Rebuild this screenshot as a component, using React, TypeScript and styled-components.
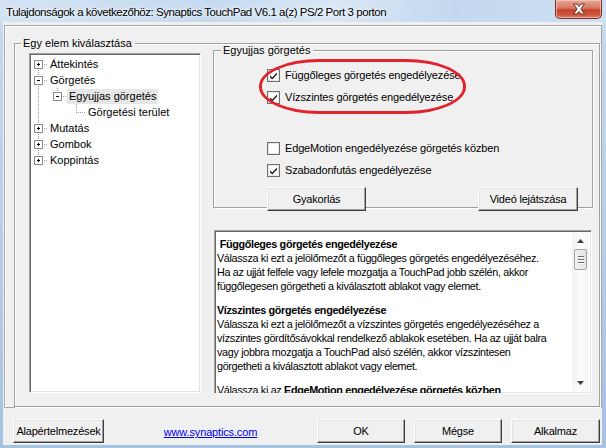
import React from 'react';
import styled, { createGlobalStyle } from 'styled-components';

const Global = createGlobalStyle`
  html, body { margin: 0; padding: 0; background: #fff; }
  body { font-family: "Liberation Sans", Arial, sans-serif; font-size: 11px; color: #000; }
  #root { width: 606px; height: 448px; }
`;

const Window = styled.div`
  width: 606px;
  height: 448px;
  box-sizing: border-box;
  display: flex;
  flex-direction: column;
  overflow: hidden;
  background: linear-gradient(180deg, #cfe0f2 0%, #c2d8ee 10%, #b4cde8 60%, #a6c2e2 100%);
`;

const TitleBar = styled.div`
  height: 22px;
  flex: none;
  display: flex;
  align-items: flex-start;
  justify-content: space-between;
  padding: 0 4px 0 6px;
  background: linear-gradient(100deg, #d3e3f4 0%, #c5daf0 35%, #d9e7f6 55%, #c3d8ee 75%, #cfe0f3 100%);
`;

const TitleText = styled.div`
  font-family: "Liberation Sans", Arial, sans-serif;
  font-size: 11.5px;
  letter-spacing: -0.46px;
  line-height: 13px;
  margin-top: 6px;
  color: #000;
  text-shadow: 0 0 6px #fff, 0 0 3px #fff;
  white-space: nowrap;
`;

const CloseButton = styled.div`
  width: 47px;
  height: 19px;
  box-sizing: border-box;
  border: 1px solid #7a3127;
  border-top: none;
  border-radius: 0 0 5px 5px;
  background: linear-gradient(180deg, #e8a899 0%, #d97762 45%, #c2412a 55%, #cf5a40 85%, #e0836a 100%);
  box-shadow: inset 0 0 0 1px rgba(255, 220, 210, 0.55);
  display: flex;
  align-items: center;
  justify-content: center;
`;

const Frame = styled.div`
  flex: 1;
  display: flex;
  flex-direction: column;
  padding: 0 4px 3px 3px;
  min-height: 0;
`;

const Client = styled.div`
  flex: 1;
  background: #f0f0f0;
  display: flex;
  flex-direction: column;
  padding: 3px 0 2px 1px;
  min-height: 0;
`;

const Panel = styled.div`
  height: 383px;
  box-sizing: border-box;
  border: 1px solid #a7a7a7;
  box-shadow: inset 1px 1px 0 #fff;
  padding: 11px 1px 0 9px;
  display: flex;
  flex-direction: column;
`;

const Group = styled.fieldset`
  margin: 0;
  min-width: 0;
  box-sizing: border-box;
  border: 1px solid #a0a0a0;
  box-shadow: inset 1px 1px 0 #fff, 1px 1px 0 #fff;
  padding: 0;
`;

const Legend = styled.legend<{ $left: number }>`
  font-size: 11px;
  line-height: 13px;
  padding: 0 3px 0 2px;
  margin-left: ${(p) => p.$left}px;
  white-space: nowrap;
`;

const MainGroup = styled(Group)`
  flex: none;
  height: 370px;
`;

const MainBody = styled.div`
  display: flex;
  padding: 3px 0 0 14px;
  gap: 12px;
`;

const Sunken = styled.div`
  box-sizing: border-box;
  background: #fff;
  border: 1px solid;
  border-color: #a0a0a0 #fff #fff #a0a0a0;
  box-shadow: inset 1px 1px 0 #696969, inset -1px -1px 0 #e3e3e3;
`;

const TreeBox = styled(Sunken)`
  width: 172px;
  height: 340px;
  padding: 2px 2px;
  overflow: hidden;
`;

const TreeRow = styled.div`
  height: 16px;
  display: flex;
  align-items: center;
`;

const TreeLabel = styled.span<{ $selected?: boolean }>`
  line-height: 15px;
  padding: 0 2px;
  white-space: nowrap;
  background: ${(p) => (p.$selected ? '#e6e6e6' : 'transparent')};
`;

const RightCol = styled.div`
  width: 380px;
  display: flex;
  flex-direction: column;
  margin-top: -9px;
`;

const OptionsGroup = styled(Group)`
  position: relative;
  height: 164px;
`;

const OptionsBody = styled.div`
  padding: 7px 0 0 53px;
  display: flex;
  flex-direction: column;
`;

const CheckRow = styled.label<{ $gap?: number }>`
  height: 22px;
  display: flex;
  align-items: center;
  gap: 5px;
  margin-top: ${(p) => p.$gap || 0}px;
  white-space: nowrap;
  letter-spacing: -0.15px;
`;

const ButtonRow = styled.div`
  display: flex;
  justify-content: space-between;
  padding-right: 14px;
  margin-top: 6px;
`;

const Button = styled.button<{ $w: number }>`
  width: ${(p) => p.$w}px;
  height: 24px;
  box-sizing: border-box;
  font-family: "Liberation Sans", Arial, sans-serif;
  font-size: 11px;
  letter-spacing: -0.2px;
  white-space: nowrap;
  color: #000;
  background: #f0f0f0;
  border: 1px solid;
  border-color: #fff #404040 #404040 #fff;
  box-shadow: inset -1px -1px 0 #a0a0a0, inset 1px 1px 0 #e3e3e3;
  padding: 0;
  border-radius: 0;
`;

const Highlight = styled.div`
  position: absolute;
  left: 45px;
  top: 2px;
  width: 207px;
  height: 55px;
  box-sizing: border-box;
  border: 3px solid #e0232d;
  border-radius: 60px / 27px;
  pointer-events: none;
`;

const DescBox = styled(Sunken)`
  margin: 22px 0 0 1px;
  width: 378px;
  height: 164px;
  display: flex;
  overflow: hidden;
`;

const DescText = styled.div`
  flex: 1;
  min-width: 0;
  padding: 6px 0 0 2px;
  font-size: 10.8px;
  letter-spacing: -0.33px;
  line-height: 14px;
  overflow: hidden;
`;

const Para = styled.div`
  margin: 0 0 10px 0;
`;

const Line = styled.div`
  white-space: nowrap;
`;

const Heading = styled.div`
  white-space: nowrap;
  font-weight: bold;
`;

const ScrollBar = styled.div`
  width: 17px;
  flex: none;
  margin: 2px 2px 2px 0;
  display: flex;
  flex-direction: column;
  align-items: center;
  background: linear-gradient(90deg, #f3f3f3, #fcfcfc 50%, #f3f3f3);
`;

const ScrollArrow = styled.div`
  height: 16px;
  display: flex;
  align-items: center;
  justify-content: center;
`;

const Thumb = styled.div`
  width: 13px;
  height: 21px;
  box-sizing: border-box;
  border: 1px solid #a4a4a4;
  border-radius: 2px;
  background: linear-gradient(90deg, #f1f1f1, #e3e3e3);
  display: flex;
  flex-direction: column;
  align-items: center;
  justify-content: center;
  gap: 2px;
`;

const Grip = styled.div`
  width: 6px;
  height: 1px;
  background: #6d6d6d;
  box-shadow: 0 1px 0 #fff;
`;

const ScrollSpacer = styled.div`
  flex: 1;
`;

const Footer = styled.div`
  display: flex;
  align-items: center;
  padding: 11px 2px 0 9px;
`;

const LinkArea = styled.div`
  flex: 1;
  display: flex;
  justify-content: center;
`;

const Link = styled.a`
  color: #0000ee;
  text-decoration: underline;
  font-size: 11px;
  letter-spacing: -0.15px;
  margin-top: 2px;
`;

const FooterButtons = styled.div`
  display: flex;
  gap: 9px;
`;

type Node = {
  label: string;
  level: number;
  exp?: '+' | '-';
  last?: boolean;
  first?: boolean;
  cont: boolean[];
  selected?: boolean;
};

const nodes: Node[] = [
  { label: 'Áttekintés', level: 0, exp: '+', first: true, cont: [] },
  { label: 'Görgetés', level: 0, exp: '-', cont: [] },
  { label: 'Egyujjas görgetés', level: 1, exp: '-', last: true, cont: [true], selected: true },
  { label: 'Görgetési terület', level: 2, last: true, cont: [true, false] },
  { label: 'Mutatás', level: 0, exp: '+', cont: [] },
  { label: 'Gombok', level: 0, exp: '+', cont: [] },
  { label: 'Koppintás', level: 0, exp: '+', last: true, cont: [] },
];

const DOT = '#a0a0a0';

function Gutter({ n }: { n: Node }) {
  const cx = (l: number) => 6 + 19 * l;
  const w = cx(n.level) + 10;
  const c = cx(n.level);
  const mid = 8;
  return (
    <svg width={w} height={16} style={{ flex: 'none', display: 'block' }}>
      {n.cont.map((on, a) =>
        on ? (
          <line key={a} x1={cx(a) + 0.5} x2={cx(a) + 0.5} y1={0} y2={16} stroke={DOT} strokeDasharray="1 1" />
        ) : null
      )}
      <line
        x1={c + 0.5}
        x2={c + 0.5}
        y1={n.first ? mid : 0}
        y2={n.last ? mid : 16}
        stroke={DOT}
        strokeDasharray="1 1"
      />
      <line x1={c} x2={c + 9} y1={mid + 0.5} y2={mid + 0.5} stroke={DOT} strokeDasharray="1 1" />
      {n.exp && (
        <g>
          <rect x={c - 3.5} y={mid - 3.5} width={8} height={8} fill="#fff" stroke="#8c8c8c" />
          <line x1={c - 1} x2={c + 2} y1={mid + 0.5} y2={mid + 0.5} stroke="#000" />
          {n.exp === '+' && <line x1={c + 0.5} x2={c + 0.5} y1={mid - 1} y2={mid + 2} stroke="#000" />}
        </g>
      )}
    </svg>
  );
}

function CheckBox({ checked }: { checked: boolean }) {
  return (
    <svg width={13} height={13} style={{ flex: 'none', display: 'block' }}>
      <rect x={0.5} y={0.5} width={12} height={12} fill="#fff" stroke="#6f6f6f" />
      <rect x={1.5} y={1.5} width={10} height={10} fill="none" stroke="#e6e6e6" />
      {checked && <path d="M3 6.2 L5.2 8.6 L10 3.6 L10 5.6 L5.2 10.6 L3 8.2 Z" fill="#1a1a1a" />}
    </svg>
  );
}

export default function App() {
  return (
    <Window>
      <Global />
      <TitleBar>
        <TitleText>Tulajdonságok a következőhöz: Synaptics TouchPad V6.1 a(z) PS/2 Port 3 porton</TitleText>
        <CloseButton>
          <svg width={14} height={12} viewBox="0 0 14 12">
            <path
              d="M1.5 1 L5 1 L7 3.6 L9 1 L12.5 1 L8.8 6 L12.5 11 L9 11 L7 8.4 L5 11 L1.5 11 L5.2 6 Z"
              fill="#fff"
              stroke="#5a2018"
              strokeWidth={0.9}
              strokeLinejoin="round"
            />
          </svg>
        </CloseButton>
      </TitleBar>
      <Frame>
        <Client>
          <Panel>
            <MainGroup>
              <Legend $left={6}>Egy elem kiválasztása</Legend>
              <MainBody>
                <TreeBox>
                  {nodes.map((n) => (
                    <TreeRow key={n.label}>
                      <Gutter n={n} />
                      <TreeLabel $selected={n.selected}>{n.label}</TreeLabel>
                    </TreeRow>
                  ))}
                </TreeBox>
                <RightCol>
                  <OptionsGroup>
                    <Legend $left={7}>Egyujjas görgetés</Legend>
                    <OptionsBody>
                      <CheckRow>
                        <CheckBox checked />
                        Függőleges görgetés engedélyezése
                      </CheckRow>
                      <CheckRow>
                        <CheckBox checked />
                        Vízszintes görgetés engedélyezése
                      </CheckRow>
                      <CheckRow $gap={29}>
                        <CheckBox checked={false} />
                        EdgeMotion engedélyezése görgetés közben
                      </CheckRow>
                      <CheckRow>
                        <CheckBox checked />
                        Szabadonfutás engedélyezése
                      </CheckRow>
                      <ButtonRow>
                        <Button $w={99}>Gyakorlás</Button>
                        <Button $w={100}>Videó lejátszása</Button>
                      </ButtonRow>
                    </OptionsBody>
                    <Highlight />
                  </OptionsGroup>
                  <DescBox>
                    <DescText>
                      <Para>
                        <Heading>&nbsp;Függőleges görgetés engedélyezése</Heading>
                        <Line>Válassza ki ezt a jelölőmezőt a függőleges görgetés engedélyezéséhez.</Line>
                        <Line>Ha az ujját felfele vagy lefele mozgatja a TouchPad jobb szélén, akkor</Line>
                        <Line>függőlegesen görgetheti a kiválasztott ablakot vagy elemet.</Line>
                      </Para>
                      <Para>
                        <Heading>Vízszintes görgetés engedélyezése</Heading>
                        <Line>Válassza ki ezt a jelölőmezőt a vízszintes görgetés engedélyezéséhez a</Line>
                        <Line>vízszintes gördítősávokkal rendelkező ablakok esetében. Ha az ujját balra</Line>
                        <Line>vagy jobbra mozgatja a TouchPad alsó szélén, akkor vízszintesen</Line>
                        <Line>görgetheti a kiválasztott ablakot vagy elemet.</Line>
                      </Para>
                      <Para>
                        <Line>
                          Válassza ki az <b>EdgeMotion engedélyezése görgetés közben</b>
                        </Line>
                      </Para>
                    </DescText>
                    <ScrollBar>
                      <ScrollArrow>
                        <svg width={7} height={4}>
                          <path d="M0 4 L3.5 0 L7 4 Z" fill="#404040" />
                        </svg>
                      </ScrollArrow>
                      <Thumb>
                        <Grip />
                        <Grip />
                        <Grip />
                      </Thumb>
                      <ScrollSpacer />
                      <ScrollArrow>
                        <svg width={7} height={4}>
                          <path d="M0 0 L7 0 L3.5 4 Z" fill="#404040" />
                        </svg>
                      </ScrollArrow>
                    </ScrollBar>
                  </DescBox>
                </RightCol>
              </MainBody>
            </MainGroup>
          </Panel>
          <Footer>
            <Button $w={91}>Alapértelmezések</Button>
            <LinkArea>
              <Link href="#">www.synaptics.com</Link>
            </LinkArea>
            <FooterButtons>
              <Button $w={88}>OK</Button>
              <Button $w={88}>Mégse</Button>
              <Button $w={89}>Alkalmaz</Button>
            </FooterButtons>
          </Footer>
        </Client>
      </Frame>
    </Window>
  );
}
